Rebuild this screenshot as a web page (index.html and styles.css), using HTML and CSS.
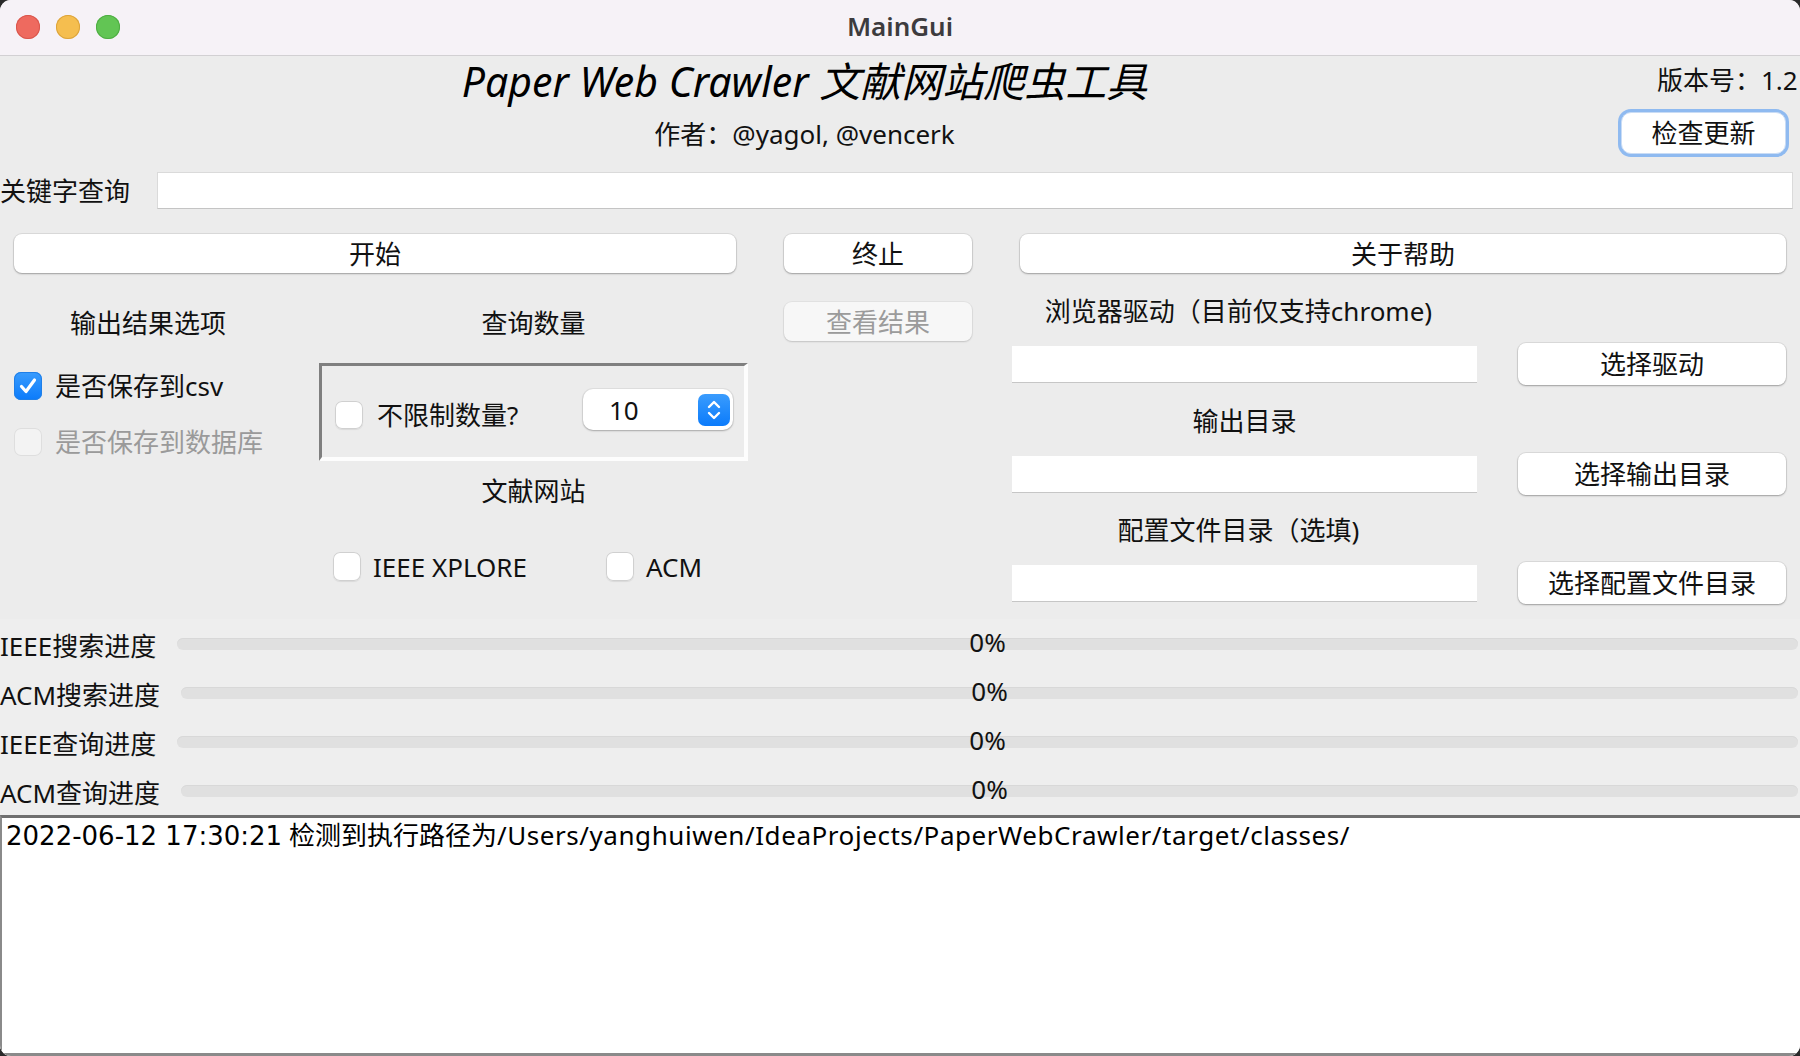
FILE: index.html
```html
<!DOCTYPE html>
<html lang="zh">
<head>
<meta charset="utf-8">
<title>MainGui</title>
<link rel="stylesheet" href="styles.css">
</head>
<body>
<div class="window">
  <div class="titlebar">
    <div class="lights">
      <span class="light red"></span>
      <span class="light yellow"></span>
      <span class="light green"></span>
    </div>
    <div class="wintitle">MainGui</div>
    <div></div>
  </div>

  <div class="header">
    <div class="header-main">
      <div class="app-title">Paper Web Crawler 文献网站爬虫工具</div>
      <div class="author">作者：@yagol, @vencerk</div>
    </div>
    <div class="header-side">
      <div class="version">版本号：1.2</div>
      <div class="btn focus update-btn">检查更新</div>
    </div>
  </div>

  <div class="keyword-row">
    <div class="kw-label">关键字查询</div>
    <div class="field kw-field"></div>
  </div>

  <div class="button-row">
    <div class="btn start-btn">开始</div>
    <div class="btn stop-btn">终止</div>
    <div class="btn help-btn">关于帮助</div>
  </div>

  <div class="middle">
    <div class="col-out">
      <div class="section-label">输出结果选项</div>
      <div class="check-row first">
        <span class="cb checked"><svg viewBox="0 0 28 28" width="28" height="28"><path d="M7.5 14.5 L12 19.5 L20.5 8" fill="none" stroke="#fff" stroke-width="3.2" stroke-linecap="round" stroke-linejoin="round"/></svg></span>
        <span class="cb-text">是否保存到csv</span>
      </div>
      <div class="check-row second disabled">
        <span class="cb"></span>
        <span class="cb-text">是否保存到数据库</span>
      </div>
    </div>

    <div class="col-query">
      <div class="section-label">查询数量</div>
      <div class="query-panel">
        <div class="check-row inline">
          <span class="cb"></span>
          <span class="cb-text">不限制数量?</span>
        </div>
        <div class="spinner">
          <span class="spin-val">10</span>
          <span class="stepper"><svg viewBox="0 0 32 32" width="32" height="32"><path d="M11 13 L16 8 L21 13" fill="none" stroke="#fff" stroke-width="2.4" stroke-linecap="round" stroke-linejoin="round"/><path d="M11 19 L16 24 L21 19" fill="none" stroke="#fff" stroke-width="2.4" stroke-linecap="round" stroke-linejoin="round"/></svg></span>
        </div>
      </div>
      <div class="section-label site-label">文献网站</div>
      <div class="site-row">
        <div class="check-row site ieee">
          <span class="cb"></span>
          <span class="cb-text">IEEE XPLORE</span>
        </div>
        <div class="check-row site">
          <span class="cb"></span>
          <span class="cb-text">ACM</span>
        </div>
      </div>
    </div>

    <div class="col-b">
      <div class="btn disabled-btn">查看结果</div>
    </div>

    <div class="col-c">
      <div class="group">
        <div class="group-label shift">浏览器驱动（目前仅支持chrome)</div>
        <div class="group-row">
          <div class="field path-field"></div>
          <div class="btn side-btn">选择驱动</div>
        </div>
      </div>
      <div class="group">
        <div class="group-label">输出目录</div>
        <div class="group-row">
          <div class="field path-field"></div>
          <div class="btn side-btn">选择输出目录</div>
        </div>
      </div>
      <div class="group">
        <div class="group-label shift">配置文件目录（选填)</div>
        <div class="group-row">
          <div class="field path-field"></div>
          <div class="btn side-btn">选择配置文件目录</div>
        </div>
      </div>
    </div>
  </div>

  <div class="progress">
    <div class="prow">
      <div class="plabel">IEEE搜索进度</div>
      <div class="pbar"><span class="ptext">0%</span></div>
    </div>
    <div class="prow">
      <div class="plabel">ACM搜索进度</div>
      <div class="pbar"><span class="ptext">0%</span></div>
    </div>
    <div class="prow">
      <div class="plabel">IEEE查询进度</div>
      <div class="pbar"><span class="ptext">0%</span></div>
    </div>
    <div class="prow">
      <div class="plabel">ACM查询进度</div>
      <div class="pbar"><span class="ptext">0%</span></div>
    </div>
  </div>

  <div class="log"><span class="stamp">2022-06-12 17:30:21</span> 检测到执行路径为<span class="path">/Users/yanghuiwen/IdeaProjects/PaperWebCrawler/target/classes/</span></div>
</div>
</body>
</html>
```

FILE: styles.css
```css
* { box-sizing: border-box; }

html, body {
  margin: 0;
  padding: 0;
  background: #2a2a2a;
}

body {
  font-family: "Noto Sans", "Noto Sans CJK SC", sans-serif;
  font-size: 26px;
  color: #111;
}

.window {
  width: 1800px;
  height: 1056px;
  background: #ececec;
  border-radius: 11px;
  overflow: hidden;
  display: flex;
  flex-direction: column;
}

/* title bar */
.titlebar {
  height: 56px;
  flex: 0 0 56px;
  background: #f6f2f7;
  border-bottom: 1px solid #d2d0d3;
  display: grid;
  grid-template-columns: 1fr auto 1fr;
  align-items: center;
}

.lights {
  display: flex;
  gap: 16px;
  padding-left: 16px;
  padding-bottom: 1px;
}

.light {
  width: 24px;
  height: 24px;
  border-radius: 50%;
  display: block;
}
.light.red { background: #ee6a5f; box-shadow: inset 0 0 0 1px #d9574d; }
.light.yellow { background: #f5be4f; box-shadow: inset 0 0 0 1px #dca43c; }
.light.green { background: #62c554; box-shadow: inset 0 0 0 1px #4fad43; }

.wintitle {
  font-size: 26px;
  font-weight: 600;
  color: #3d3b3e;
  line-height: 30px;
  padding-bottom: 4px;
}

/* header */
.header {
  display: flex;
  height: 98px;
  flex: 0 0 98px;
}

.header-main {
  flex: 0 0 1621px;
  display: flex;
  flex-direction: column;
  align-items: center;
  padding-right: 12px;
}

.app-title {
  font-style: italic;
  font-size: 41px;
  line-height: 50px;
  color: #000;
}

.author {
  margin-top: 12px;
  line-height: 32px;
  color: #111;
}

.header-side {
  flex: 1;
  min-width: 0;
}

.version {
  margin-top: 8px;
  padding-left: 36px;
  line-height: 32px;
  white-space: nowrap;
}

.btn {
  background: #fff;
  border-radius: 8px;
  height: 39px;
  display: flex;
  align-items: center;
  justify-content: center;
  line-height: 32px;
  color: #111;
  box-shadow: 0 0 0 1px rgba(0,0,0,0.07), 0 1px 2px rgba(0,0,0,0.28);
  white-space: nowrap;
}

.update-btn {
  margin-top: 16px;
  width: 165px;
  height: 42px;
}

.btn.focus {
  border-radius: 10px;
  box-shadow: 0 0 0 3px #8fbaf0, 0 1px 2px rgba(0,0,0,0.2);
  border: 1px solid #c9dcf5;
}

/* keyword */
.keyword-row {
  display: flex;
  align-items: center;
  height: 37px;
  margin-top: 18px;
}

.kw-label {
  width: 157px;
  flex: 0 0 157px;
  line-height: 32px;
}

.field {
  background: #fff;
  height: 36px;
  box-shadow: 0 1px 0 #c6c6c6;
}

.kw-field {
  flex: 1;
  margin-right: 7px;
  height: 37px;
  border: 1px solid #dadada;
  border-bottom-color: #c4c4c4;
  box-shadow: none;
}

/* buttons row */
.button-row {
  display: flex;
  margin-top: 25px;
  padding-left: 14px;
}

.start-btn { width: 722px; }
.stop-btn { width: 188px; margin-left: 48px; }
.help-btn { width: 766px; margin-left: 48px; }

/* middle */
.middle {
  display: flex;
  align-items: flex-start;
}

.section-label {
  line-height: 32px;
  text-align: center;
  margin-top: 34px;
}

.col-out {
  width: 296px;
  flex: 0 0 296px;
}

.check-row {
  display: flex;
  align-items: center;
  gap: 13px;
  height: 28px;
  line-height: 32px;
  white-space: nowrap;
}

.col-out .check-row { padding-left: 14px; }
.check-row.first { margin-top: 33px; }
.check-row.second { margin-top: 28px; }
.check-row.disabled .cb-text { color: #9a9a9a; }
.check-row.disabled .cb { background: #f3f3f3; box-shadow: inset 0 0 0 1px #dedede; }

.cb {
  width: 28px;
  height: 28px;
  flex: 0 0 28px;
  border-radius: 7px;
  background: #fff;
  box-shadow: inset 0 0 0 1px #d0d0d0, 0 1px 1px rgba(0,0,0,0.08);
  display: block;
}

.cb svg { display: block; }

.cb.checked {
  background: linear-gradient(#3a9cfd, #0b7bfb);
  box-shadow: inset 0 0 0 1px #1f7fe8;
}

.col-query {
  width: 429px;
  flex: 0 0 429px;
  margin-left: 23px;
}

.query-panel {
  margin-top: 24px;
  height: 98px;
  border-style: solid;
  border-width: 3px 4px 4px 3px;
  border-color: #7f7f7f #fdfdfd #fdfdfd #7f7f7f;
  display: flex;
  align-items: center;
  justify-content: space-between;
  padding: 0 11px 0 13px;
}

.check-row.inline { gap: 14px; margin-top: 6px; }

.spinner {
  width: 150px;
  height: 41px;
  background: #fff;
  border-radius: 10px;
  box-shadow: 0 0 0 1px rgba(0,0,0,0.05), 0 1px 2px rgba(0,0,0,0.25);
  display: flex;
  align-items: center;
  justify-content: space-between;
  padding: 0 3px 0 26px;
  margin-top: -4px;
}

.spin-val { line-height: 32px; }

.stepper {
  width: 32px;
  height: 32px;
  border-radius: 7px;
  background: linear-gradient(#3a9cfd, #0b7bfb);
  display: block;
}
.stepper svg { display: block; }

.site-label { margin-top: 14px; }

.site-row {
  display: flex;
  margin-top: 45px;
  padding-left: 14px;
}

.check-row.site { gap: 12px; height: 29px; }
.check-row.site .cb { height: 29px; }
.check-row.ieee { width: 273px; }

.col-b {
  width: 188px;
  flex: 0 0 188px;
  margin-left: 36px;
}

.disabled-btn {
  margin-top: 29px;
  background: #f7f7f7;
  color: #9b9b9b;
  box-shadow: 0 0 0 1px rgba(0,0,0,0.04), 0 1px 2px rgba(0,0,0,0.14);
}

.col-c {
  margin-left: 40px;
  width: 774px;
  flex: 0 0 774px;
}

.group { margin-top: 22px; }
.group + .group { margin-top: 23px; }
.group:last-child { margin-top: 22px; }

.group-label {
  width: 465px;
  text-align: center;
  line-height: 32px;
  white-space: nowrap;
}

.group-label.shift { padding-right: 12px; }

.group-row {
  display: flex;
  align-items: center;
  height: 36px;
  margin-top: 19px;
}

.path-field {
  width: 465px;
  flex: 0 0 465px;
}

.side-btn {
  width: 268px;
  height: 42px;
  margin-left: 41px;
  flex: 0 0 268px;
}

/* progress */
.progress {
  margin-top: 18px;
  background: #eeeeee;
}

.prow {
  display: flex;
  align-items: center;
  height: 49px;
}

.plabel {
  line-height: 32px;
  white-space: nowrap;
  margin-right: 21px;
  padding-top: 4px;
}

.pbar {
  flex: 1;
  height: 12px;
  margin-right: 2px;
  border-radius: 6px;
  background: #e0e0e0;
  box-shadow: inset 0 1px 0 #d8d8d8;
  position: relative;
}

.ptext {
  position: absolute;
  left: 50%;
  top: 50%;
  transform: translate(-50%, -50%);
  line-height: 32px;
  color: #111;
  margin-top: -2px;
}

/* log */
.log {
  flex: 1;
  background: #fff;
  border-style: solid;
  border-width: 3px 0 3px 2px;
  border-color: #6f6f6f #9a9a9a #8a8a8a #8a8a8a;
  padding: 0 4px;
  line-height: 34px;
  white-space: nowrap;
  color: #000;
}

.stamp {
  font-family: "DejaVu Sans", "Noto Sans", sans-serif;
  font-size: 26px;
}

.path {
  letter-spacing: 0.56px;
}
```
